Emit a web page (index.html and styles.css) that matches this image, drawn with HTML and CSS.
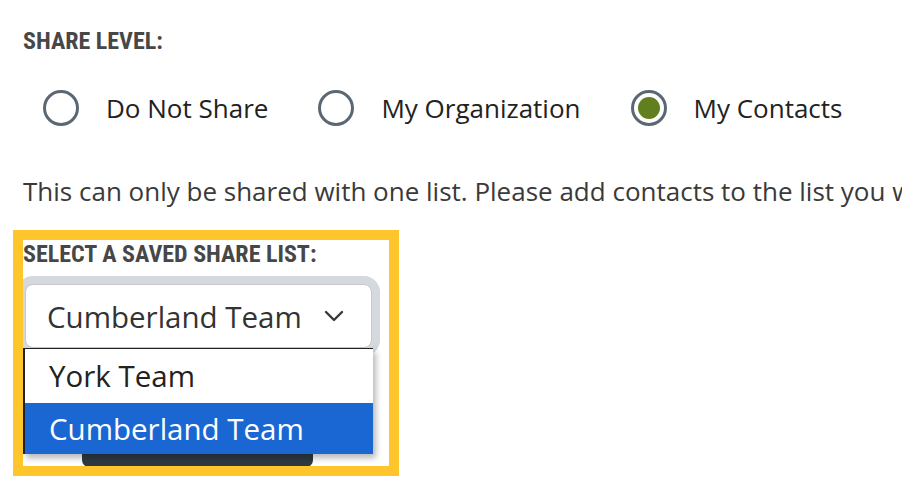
FILE: index.html
```html
<!DOCTYPE html>
<html lang="en">
<head>
  <meta charset="UTF-8">
  <meta name="viewport" content="width=device-width, initial-scale=1.0">
  <title>Share Level</title>
  <link rel="stylesheet" href="styles.css">
</head>
<body>
  <div class="share-form">
    <h4 class="field-label">Share Level:</h4>

    <div class="radio-row">
      <label class="radio-option">
        <span class="radio-circle"></span>
        <span class="radio-text">Do Not Share</span>
      </label>
      <label class="radio-option">
        <span class="radio-circle"></span>
        <span class="radio-text">My Organization</span>
      </label>
      <label class="radio-option">
        <span class="radio-circle checked"></span>
        <span class="radio-text">My Contacts</span>
      </label>
    </div>

    <p class="share-note">This can only be shared with one list. Please add contacts to the list you want to share with before saving.</p>

    <div class="share-list highlight">
      <h4 class="field-label">Select a saved share list:</h4>
      <div class="select-wrap">
        <div class="select-box">
          <span class="select-value">Cumberland Team</span>
          <svg class="select-chevron" width="20" height="12" viewBox="0 0 20 12">
            <path d="M2 2 L10 10 L18 2" fill="none" stroke="#343a40" stroke-width="2.4" stroke-linecap="round" stroke-linejoin="round"/>
          </svg>
        </div>
        <ul class="select-menu">
          <li class="select-item">York Team</li>
          <li class="select-item active">Cumberland Team</li>
        </ul>
      </div>
      <!-- button is hidden under the open dropdown -->
      <button class="btn-save" aria-label="Save"></button>
    </div>
  </div>
</body>
</html>
```

FILE: styles.css
```css
body {
  margin: 0;
  background-color: white;
  font-family: "Open Sans", "Noto Sans", sans-serif;
  color: #2b2b2b;
}

.share-form {
  padding-top: 27px;
  overflow: hidden;
}

.field-label {
  margin: 0;
  font-family: Roboto, "Liberation Sans", sans-serif;
  font-stretch: 87.5%;
  font-weight: 700;
  font-size: 24px;
  line-height: 29px;
  text-transform: uppercase;
  color: #474747;
}

.share-form > .field-label {
  margin-left: 23px;
}

.radio-row {
  display: flex;
  gap: 50px;
  margin-top: 34px;
  padding-left: 43px;
}

.radio-option {
  display: flex;
  align-items: center;
  gap: 27px;
}

.radio-circle {
  box-sizing: border-box;
  width: 36px;
  height: 36px;
  border: 3px solid #5b6873;
  border-radius: 50%;
  background-color: white;
  display: flex;
  align-items: center;
  justify-content: center;
}

.radio-circle.checked::after {
  content: "";
  width: 22px;
  height: 22px;
  border-radius: 50%;
  background-color: #627f1f;
}

.radio-text {
  font-size: 26px;
  line-height: 36px;
  color: #222;
}

.share-note {
  margin: 49px 0 0 23px;
  font-size: 26px;
  line-height: 32px;
  color: #3a3a3a;
  white-space: nowrap;
}

.share-list {
  margin: 23px 0 0 13px;
  width: 366px;
  height: 226px;
  overflow: hidden;
  box-sizing: content-box;
}

.highlight {
  border: 10px solid #ffc62b;
}

.select-wrap {
  position: relative;
  margin-top: 15px;
  margin-left: 2px;
}

.select-box {
  box-sizing: border-box;
  width: 347px;
  height: 64px;
  border: 1px solid #c4c9ce;
  border-radius: 8px;
  box-shadow: 0 0 0 8px #d5d9dd;
  background-color: white;
  display: flex;
  align-items: center;
  justify-content: space-between;
  padding: 0 27px 0 21px;
}

.select-value {
  font-size: 29.5px;
  color: #333;
}

.select-menu {
  position: absolute;
  top: 64px;
  left: -2px;
  width: 348px;
  margin: 0;
  padding: 0;
  list-style: none;
  background-color: white;
  border-top: 1px solid #222;
  border-left: 2px solid #222;
  box-shadow: 3px 4px 6px rgba(0, 0, 0, 0.28);
}

.select-item {
  padding-left: 24px;
  font-size: 29.5px;
  color: #222;
  height: 54px;
  line-height: 54px;
}

.select-item.active {
  height: 51px;
  line-height: 51px;
  background-color: #1a67d4;
  color: white;
}

.btn-save {
  display: block;
  margin: 71px 0 0 59px;
  width: 231px;
  height: 48px;
  border: none;
  border-radius: 7px;
  background-color: #2e3a43;
}
```
